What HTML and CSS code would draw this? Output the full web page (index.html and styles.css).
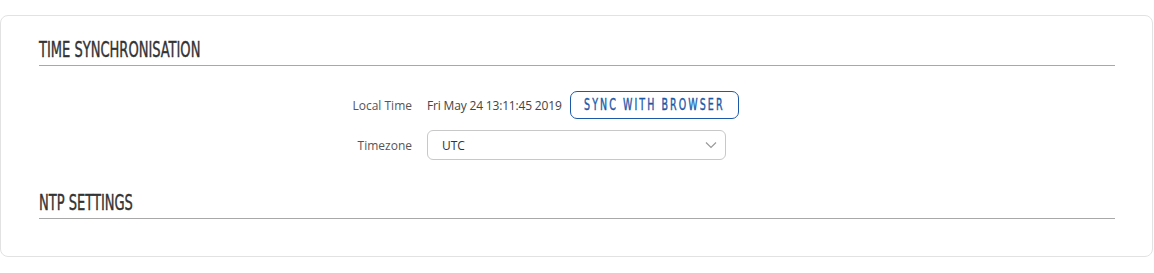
FILE: index.html
```html
<!DOCTYPE html>
<html lang="en">
<head>
    <meta charset="UTF-8">
    <meta name="viewport" content="width=device-width, initial-scale=1.0">
    <title>Time Synchronisation</title>
    <link rel="stylesheet" href="styles.css">
</head>
<body>
    <div class="card">
        <div class="section">
            <h2 class="section-title"><span>Time Synchronisation</span></h2>
            <div class="form">
                <div class="row">
                    <label class="label">Local Time</label>
                    <div class="value">
                        <span class="time">Fri May 24 13:11:45 2019</span>
                        <button class="btn"><span>Sync with browser</span></button>
                    </div>
                </div>
                <div class="row">
                    <label class="label">Timezone</label>
                    <div class="value">
                        <div class="select">
                            <span>UTC</span>
                            <svg width="12" height="8" viewBox="0 0 12 8">
                                <path d="M1 1.5 L6 6.5 L11 1.5" fill="none" stroke="#9a9a9a" stroke-width="1.2"/>
                            </svg>
                        </div>
                    </div>
                </div>
            </div>
        </div>
        <div class="section">
            <h2 class="section-title"><span>NTP Settings</span></h2>
        </div>
    </div>
</body>
</html>
```

FILE: styles.css
```css
body {
    margin: 0;
    padding: 15px 1px 0 0;
    background-color: white;
    font-family: "Open Sans", sans-serif;
}
.card {
    border: 1px solid #e2e2e2;
    border-radius: 8px;
    padding: 20px 37px 38px 38px;
    height: 182px;
}
.section-title {
    margin: 0;
    padding-bottom: 1px;
    font-family: "DejaVu Sans Condensed", sans-serif;
    font-weight: normal;
    font-size: 21px;
    line-height: 28px;
    color: #333;
    text-transform: uppercase;
    border-bottom: 1px solid #a8a8a8;
    white-space: nowrap;
}
.section-title span {
    display: inline-block;
    transform: scaleX(0.69);
    transform-origin: left center;
    -webkit-text-stroke: 0.4px #333;
}
.form {
    padding: 25px 0 29px;
    display: flex;
    flex-direction: column;
    gap: 11px;
}
.row {
    display: grid;
    grid-template-columns: 373px 1fr;
    gap: 15px;
    align-items: center;
    font-size: 12px;
    color: #555;
}
.label {
    text-align: right;
}
.value {
    display: flex;
    align-items: center;
    gap: 8px;
}
.time {
    color: #444;
    letter-spacing: -0.17px;
}
.btn {
    height: 28px;
    width: 169px;
    border: 1px solid #1c5aa8;
    border-radius: 7px;
    background: white;
    color: #1c5aa8;
    font-family: "DejaVu Sans Condensed", sans-serif;
    font-size: 15px;
    text-transform: uppercase;
    white-space: nowrap;
    cursor: pointer;
    padding: 0;
    display: flex;
    align-items: center;
    justify-content: center;
}
.btn span {
    flex-shrink: 0;
    letter-spacing: 3px;
    transform: scaleX(0.7);
    -webkit-text-stroke: 0.4px #1c5aa8;
}
.select {
    box-sizing: border-box;
    height: 30px;
    width: 299px;
    border: 1px solid #c8c8c8;
    border-radius: 6px;
    display: flex;
    align-items: center;
    justify-content: space-between;
    padding: 0 8px 0 14px;
    color: #333;
}
```
